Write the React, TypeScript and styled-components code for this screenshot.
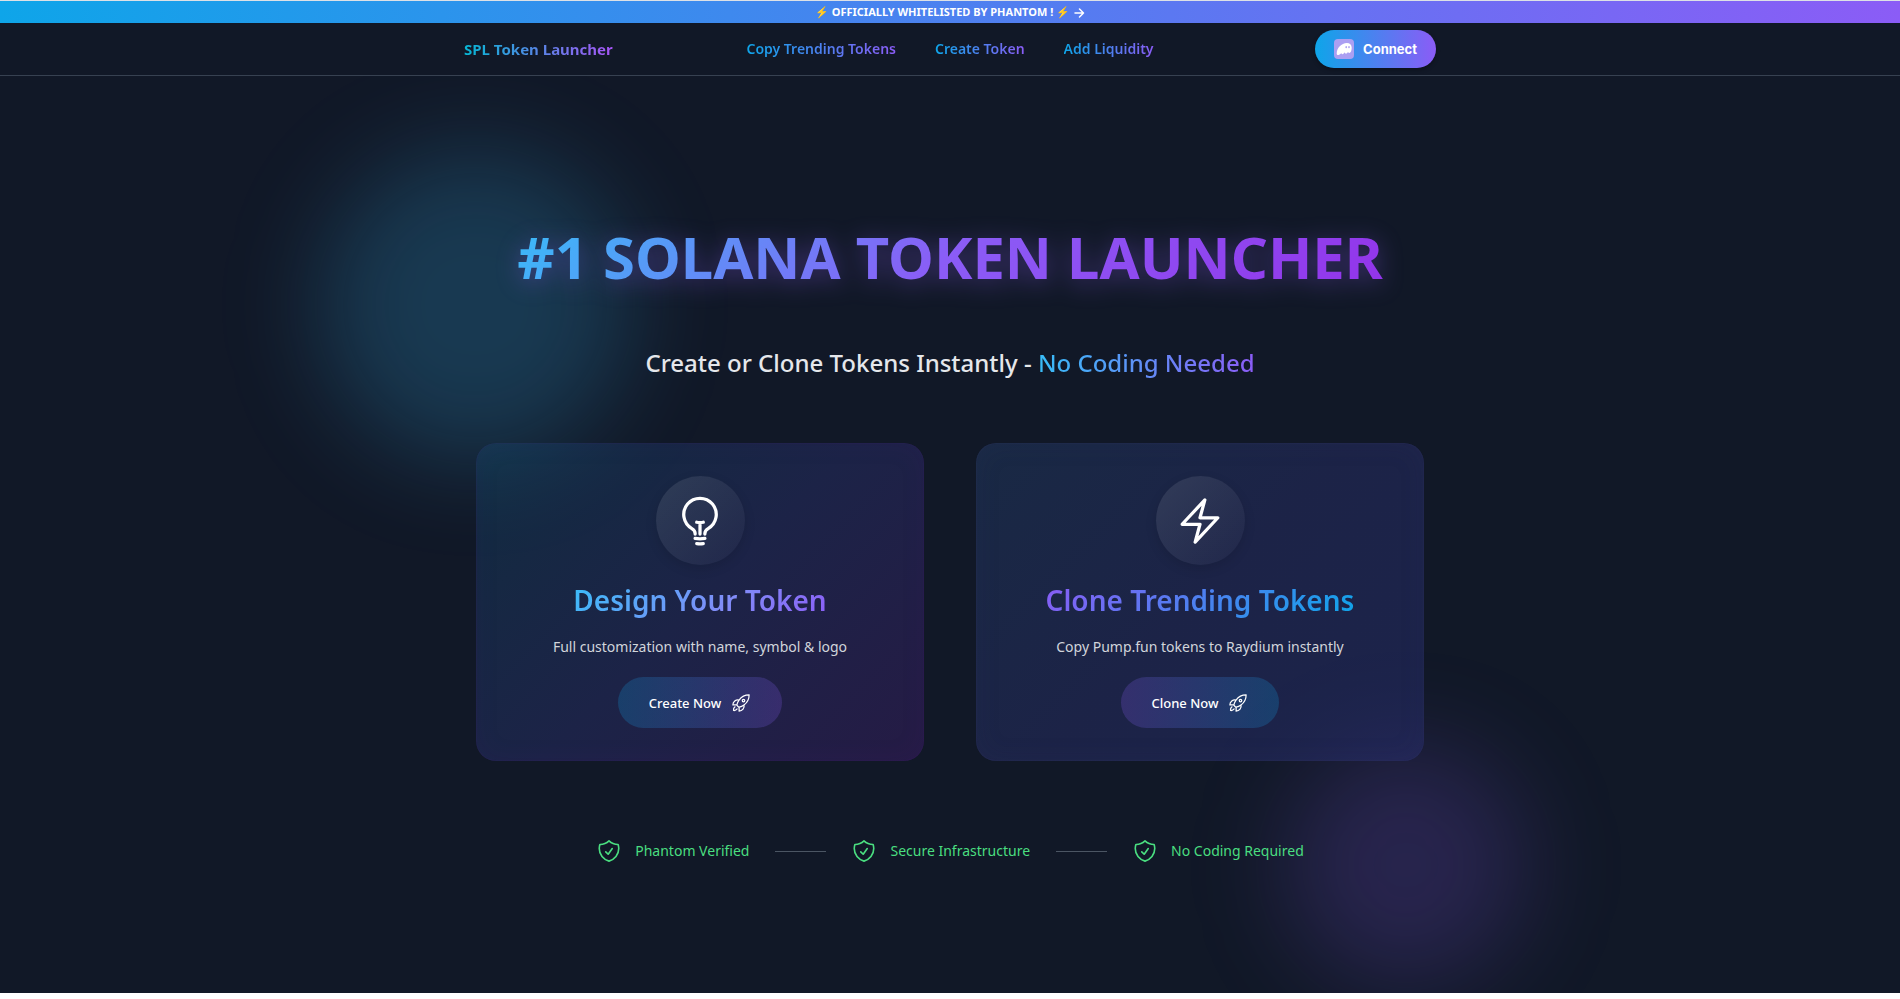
import React from "react";
import styled, { createGlobalStyle, css } from "styled-components";
import {
  HiOutlineBolt,
  HiOutlineLightBulb,
  HiOutlineRocketLaunch,
  HiOutlineShieldCheck,
} from "react-icons/hi2";

const sans = `"Noto Sans", "Open Sans", sans-serif`;

const GlobalStyle = createGlobalStyle`
  *, *::before, *::after { box-sizing: border-box; }
  body { margin: 0; background: #fff; font-family: ${sans}; }
  h1, h2, p, ul { margin: 0; padding: 0; }
  a { color: inherit; text-decoration: none; }
  button { font: inherit; border: 0; cursor: pointer; }
`;

const gradientText = css<{ $gradient: string }>`
  background: ${(p) => p.$gradient};
  background-clip: text;
  -webkit-background-clip: text;
  && { color: transparent; }
`;

const Page = styled.div`
  background: #111827;
  margin-bottom: 6px;
  border-top: 1px solid #dde1e6;
`;

const Banner = styled.a`
  display: flex;
  align-items: center;
  justify-content: center;
  gap: 3px;
  height: 22px;
  padding-bottom: 1px;
  background: linear-gradient(90deg, #0ea5e9, #8b5cf6);
  && { color: #fff; }
  font-size: 11px;
  line-height: 16px;
  font-weight: 700;
`;

const Header = styled.header`
  border-bottom: 1px solid #374151;
`;

const HeaderInner = styled.div`
  display: grid;
  grid-template-columns: 1fr auto 1fr;
  align-items: center;
  max-width: 1020px;
  height: 52px;
  margin: 0 auto;
  padding: 0 24px;
`;

const Brand = styled.a<{ $gradient: string }>`
  ${gradientText}
  justify-self: start;
  font-size: 15px;
  line-height: 20px;
  font-weight: 700;
`;

const Nav = styled.nav`
  display: flex;
  gap: 39px;
`;

const NavLink = styled.a<{ $gradient: string }>`
  ${gradientText}
  font-size: 14px;
  line-height: 20px;
  font-weight: 600;
`;

const ConnectButton = styled.button`
  display: flex;
  align-items: center;
  justify-self: end;
  gap: 9px;
  height: 38px;
  padding: 0 19px;
  border-radius: 19px;
  background: linear-gradient(90deg, #0ea5e9, #8b5cf6);
  box-shadow: 0 2px 4px rgba(0, 0, 0, 0.3);
  && { font-family: Inter, sans-serif; font-size: 13px; font-weight: 700; }
  color: #fff;
`;

const Hero = styled.main`
  position: relative;
  display: flex;
  flex-direction: column;
  align-items: center;
  overflow: hidden;
  padding: 142px 26px 129px;
`;

const Glow = styled.div<{ $x: string; $y: string; $size: number; $color: string }>`
  position: absolute;
  left: ${(p) => p.$x};
  top: ${(p) => p.$y};
  width: ${(p) => p.$size}px;
  height: ${(p) => p.$size}px;
  transform: translate(-50%, -50%);
  border-radius: 50%;
  background: ${(p) => p.$color};
  filter: blur(48px);
`;

const Title = styled.h1<{ $gradient: string }>`
  ${gradientText}
  position: relative;
  font-size: 58px;
  line-height: 78px;
  font-weight: 700;
  filter: drop-shadow(0 4px 12px rgba(139, 92, 246, 0.4));
`;

const Subtitle = styled.p`
  position: relative;
  margin-top: 49px;
  font-size: 24px;
  line-height: 36px;
  font-weight: 500;
  color: #e5e7eb;
`;

const Accent = styled.span<{ $gradient: string }>`
  ${gradientText}
`;

const Cards = styled.div`
  position: relative;
  display: grid;
  grid-template-columns: 1fr 1fr;
  gap: 52px;
  width: 100%;
  max-width: 948px;
  margin-top: 62px;
`;

const Card = styled.section<{ $background: string; $edge: string }>`
  display: flex;
  flex-direction: column;
  align-items: center;
  padding: 33px;
  border-radius: 20px;
  background: ${(p) => p.$background};
  box-shadow: inset 0 0 0 1px ${(p) => p.$edge}, inset 0 0 26px ${(p) => p.$edge};
`;

const IconDisc = styled.div`
  display: grid;
  place-items: center;
  width: 89px;
  height: 89px;
  border-radius: 50%;
  background: linear-gradient(135deg, rgba(255, 255, 255, 0.1), rgba(255, 255, 255, 0.02));
  box-shadow: 0 4px 12px rgba(0, 0, 0, 0.12);
  color: #fff;
`;

const CardTitle = styled.h2<{ $gradient: string }>`
  ${gradientText}
  margin-top: 15px;
  font-size: 28px;
  line-height: 40px;
  font-weight: 600;
`;

const CardText = styled.p`
  margin-top: 17px;
  font-size: 14px;
  line-height: 20px;
  color: #d1d5db;
`;

const CardButton = styled.button<{ $background: string }>`
  display: flex;
  align-items: center;
  gap: 10px;
  height: 51px;
  margin-top: 20px;
  padding: 0 31px;
  border-radius: 26px;
  background: ${(p) => p.$background};
  && { font-size: 13px; font-weight: 500; }
  color: #fff;
`;

const Badges = styled.ul`
  position: relative;
  display: flex;
  align-items: center;
  gap: 26px;
  margin-top: 77px;
  list-style: none;
`;

const Badge = styled.li`
  display: flex;
  align-items: center;
  gap: 13px;
  font-size: 14px;
  line-height: 26px;
  color: #4ade80;

  & + &::before {
    content: "";
    width: 51px;
    height: 1px;
    margin-right: 12px;
    background: #4b5563;
  }
`;

const sky = "linear-gradient(90deg, #0ea5e9, #8b5cf6)";

const features = [
  {
    title: "Design Your Token",
    text: "Full customization with name, symbol & logo",
    action: "Create Now",
    Icon: HiOutlineLightBulb,
    titleGradient: "linear-gradient(135deg, #38bdf8, #818cf8 60%, #8b5cf6)",
    background:
      "linear-gradient(135deg, rgba(18,80,110,0.35), rgba(39,46,103,0.5) 50%, rgba(57,30,99,0.5))",
    edge: "rgba(88, 28, 135, 0.08)",
    buttonBackground: "linear-gradient(90deg, rgba(14,165,233,0.22), rgba(139,92,246,0.22))",
  },
  {
    title: "Clone Trending Tokens",
    text: "Copy Pump.fun tokens to Raydium instantly",
    action: "Clone Now",
    Icon: HiOutlineBolt,
    titleGradient: "linear-gradient(135deg, #8b5cf6, #0ea5e9)",
    background:
      "linear-gradient(135deg, rgba(33,58,97,0.5), rgba(39,46,103,0.5) 50%, rgba(39,46,111,0.5))",
    edge: "rgba(60, 60, 110, 0.12)",
    buttonBackground: "linear-gradient(90deg, rgba(139,92,246,0.22), rgba(14,165,233,0.22))",
  },
];

const badges = ["Phantom Verified", "Secure Infrastructure", "No Coding Required"];

const GhostIcon = () => (
  <svg width="20" height="20" viewBox="0 0 20 20" aria-hidden="true">
    <rect width="20" height="20" rx="4" fill="#ab9ff2" />
    <path
      fill="#fff"
      d="M2.700 14.400C2.700 9.200 7.400 4 12.800 4c3 0 4.900 1.900 4.900 4.700 0 2.800-1 5.200-2.400 5.200-.9 0-1.200-.6-1.300-1.200-.4.900-1 1.900-2 1.900-.8 0-1.200-.6-1.300-1.300-.6 1-1.300 1.900-2.300 1.900-.7 0-1.100-.5-1.100-1.100-.8 1-1.700 1.900-2.900 1.900-1.100 0-1.700-.6-1.700-1.600z"
    />
    <ellipse cx="12.200" cy="8.200" rx=".8" ry="1.100" fill="#ab9ff2" />
    <ellipse cx="15" cy="8.200" rx=".8" ry="1.100" fill="#ab9ff2" />
  </svg>
);

const ArrowIcon = () => (
  <svg
    width="12"
    height="12"
    viewBox="0 0 12 12"
    fill="none"
    stroke="currentColor"
    strokeWidth="1.5"
    strokeLinecap="round"
    strokeLinejoin="round"
    aria-hidden="true"
  >
    <path d="M2 7h8.500M6.500 3l4 4-4 4" />
  </svg>
);

export default function App() {
  return (
    <>
      <GlobalStyle />
      <Page>
        <Banner href="#phantom">
          ⚡ OFFICIALLY WHITELISTED BY PHANTOM ! ⚡ <ArrowIcon />
        </Banner>
        <Header>
          <HeaderInner>
            <Brand href="#home" $gradient="linear-gradient(90deg, #06b6d4, #a855f7)">
              SPL Token Launcher
            </Brand>
            <Nav>
              <NavLink href="#copy" $gradient={sky}>Copy Trending Tokens</NavLink>
              <NavLink href="#create" $gradient={sky}>Create Token</NavLink>
              <NavLink href="#liquidity" $gradient={sky}>Add Liquidity</NavLink>
            </Nav>
            <ConnectButton type="button">
              <GhostIcon />
              Connect
            </ConnectButton>
          </HeaderInner>
        </Header>
        <Hero>
          <Glow $x="25%" $y="25%" $size={312} $color="rgba(56, 189, 248, 0.2)" />
          <Glow $x="74%" $y="86%" $size={240} $color="rgba(139, 92, 246, 0.19)" />
          <Title $gradient="linear-gradient(135deg, #38bdf8, #8b5cf6 50%, #9333ea)">
            #1 SOLANA TOKEN LAUNCHER
          </Title>
          <Subtitle>
            Create or Clone Tokens Instantly -{" "}
            <Accent $gradient="linear-gradient(90deg, #38bdf8, #8b5cf6)">No Coding Needed</Accent>
          </Subtitle>
          <Cards>
            {features.map(({ Icon, ...f }) => (
              <Card key={f.title} $background={f.background} $edge={f.edge}>
                <IconDisc>
                  <Icon size={52} />
                </IconDisc>
                <CardTitle $gradient={f.titleGradient}>{f.title}</CardTitle>
                <CardText>{f.text}</CardText>
                <CardButton type="button" $background={f.buttonBackground}>
                  {f.action}
                  <HiOutlineRocketLaunch size={20} />
                </CardButton>
              </Card>
            ))}
          </Cards>
          <Badges>
            {badges.map((label) => (
              <Badge key={label}>
                <HiOutlineShieldCheck size={26} />
                {label}
              </Badge>
            ))}
          </Badges>
        </Hero>
      </Page>
    </>
  );
}
